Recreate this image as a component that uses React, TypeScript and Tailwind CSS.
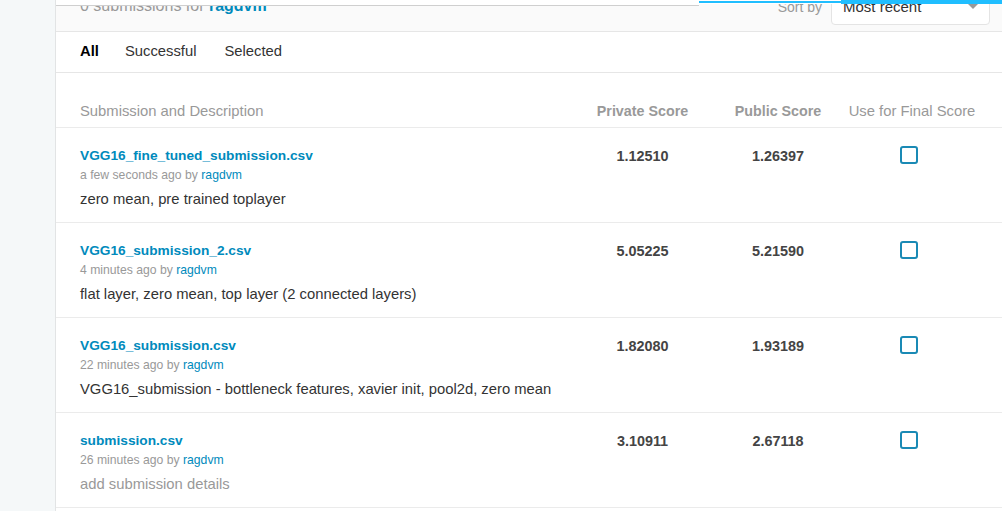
import React from "react";

type Row = {
  name: string;
  time: string;
  desc: string;
  placeholder?: boolean;
  priv: string;
  pub: string;
};

const rows: Row[] = [
  { name: "VGG16_fine_tuned_submission.csv", time: "a few seconds ago", desc: "zero mean, pre trained toplayer", priv: "1.12510", pub: "1.26397" },
  { name: "VGG16_submission_2.csv", time: "4 minutes ago", desc: "flat layer, zero mean, top layer (2 connected layers)", priv: "5.05225", pub: "5.21590" },
  { name: "VGG16_submission.csv", time: "22 minutes ago", desc: "VGG16_submission - bottleneck features, xavier init, pool2d, zero mean", priv: "1.82080", pub: "1.93189" },
  { name: "submission.csv", time: "26 minutes ago", desc: "add submission details", placeholder: true, priv: "3.10911", pub: "2.67118" },
];

export default function App() {
  return (
    <div className="flex h-[511px] w-[1002px] overflow-hidden bg-white font-['Liberation_Sans',Arial,sans-serif] text-[#333]">
      <div className="w-[56px] shrink-0 border-r border-[#e2e4e5] bg-[#f5f8f9]" />
      <div className="relative flex min-w-0 flex-1 flex-col">
        {/* top overlay bar */}
        <div className="absolute left-0 top-0 z-10 h-[6px] w-[643px] border-b border-[#cfcfcf] bg-white" />
        <div className="absolute left-[643px] top-0 z-10 h-[4px] w-[142px] bg-white">
          <div className="mt-[1px] h-[2px] w-full bg-[#20beff]" />
        </div>
        <div className="absolute left-[785px] right-0 top-0 z-10 h-[4px] bg-[#20beff]" />

        {/* header */}
        <div className="flex h-[32px] shrink-0 items-start justify-between border-b border-[#e6e6e6] bg-[#fafafa] pl-6 pr-[12px]">
          <div className="mt-[-4px] text-[16px] leading-[20px] text-[#999]">
            0 submissions for <span className="font-bold text-[#008abc]">ragdvm</span>
          </div>
          <div className="flex items-start">
            <span className="mt-[-3px] text-[14px] leading-[20px] text-[#999]">Sort by</span>
            <div className="relative ml-[9px] mt-[-12px] flex h-[37px] w-[159px] items-start rounded-[4px] border border-[#e4e4e4] bg-white pl-[11px] pt-[8px]">
              <span className="text-[15px] leading-[20px] text-[#333]">Most recent</span>
              <span className="absolute right-[11px] top-[15px] h-0 w-0 border-x-[5px] border-t-[5px] border-x-transparent border-t-[#999]" />
            </div>
          </div>
        </div>

        {/* tabs */}
        <div className="flex h-[41px] shrink-0 items-center border-b border-[#e6e6e6] pb-[2px] pl-6 text-[14.8px]">
          <span className="font-bold text-black">All</span>
          <span className="ml-[26px] text-[#333]">Successful</span>
          <span className="ml-[28px] text-[#333]">Selected</span>
        </div>

        {/* table header */}
        <div className="grid h-[55px] shrink-0 grid-cols-[495px_135px_136px_132px] items-end border-b border-[#ebebeb] pb-[6px] pl-6 text-[14.8px] leading-[20px] text-[#999]">
          <span>Submission and Description</span>
          <span className="text-center text-[14.3px] font-bold">Private Score</span>
          <span className="text-center text-[14.3px] font-bold">Public Score</span>
          <span className="whitespace-nowrap text-center">Use for Final Score</span>
        </div>

        {rows.map((r) => (
          <div
            key={r.name}
            className="grid shrink-0 grid-cols-[495px_135px_136px_132px] items-start border-b border-[#ebebeb] pb-[13px] pl-6 pt-[18px]"
          >
            <div className="flex flex-col">
              <span className="text-[13.7px] font-bold leading-[20px] text-[#008abc]">{r.name}</span>
              <span className="mt-[1px] text-[12.2px] leading-[16px] text-[#999]">
                {r.time} by <span className="text-[#008abc]">ragdvm</span>
              </span>
              <span className={`mt-[6px] whitespace-nowrap text-[14.8px] leading-[20px] ${r.placeholder ? "text-[#999]" : "text-[#333]"}`}>
                {r.desc}
              </span>
            </div>
            <span className="text-center text-[14.4px] font-bold leading-[20px] text-[#444]">{r.priv}</span>
            <span className="text-center text-[14.4px] font-bold leading-[20px] text-[#444]">{r.pub}</span>
            <div className="flex justify-center pr-[6px]">
              <div className="h-[18px] w-[18px] rounded-[3px] border-2 border-[#1a8ab5] bg-white" />
            </div>
          </div>
        ))}
      </div>
    </div>
  );
}
